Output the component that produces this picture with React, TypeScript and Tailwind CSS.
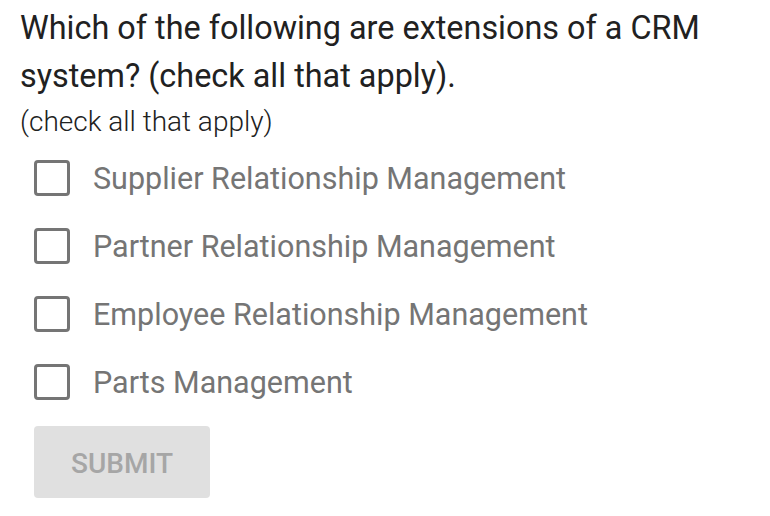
import { useState } from "react";

const options = [
  "Supplier Relationship Management",
  "Partner Relationship Management",
  "Employee Relationship Management",
  "Parts Management",
];

export default function App() {
  const [checked, setChecked] = useState<boolean[]>(options.map(() => false));

  const toggle = (i: number) =>
    setChecked((prev) => prev.map((v, j) => (j === i ? !v : v)));

  return (
    <div className="min-h-screen bg-white px-5 pt-[4px] font-['Roboto',sans-serif]">
      <h1 className="text-[32.4px] leading-[48px] text-[#212121] font-normal">
        Which of the following are extensions of a CRM system? (check all that apply).
      </h1>
      <p className="text-[28px] leading-[44px] font-light text-[#212121]">(check all that apply)</p>

      <div className="flex flex-col">
        {options.map((label, i) => (
          <label
            key={label}
            className="flex h-[68px] cursor-pointer items-center gap-[23px] pl-[14px]"
            onClick={() => toggle(i)}
          >
            <span className="flex h-[36px] w-[36px] shrink-0 items-center justify-center rounded-[4px] border-[3px] border-[#757575]">
              {checked[i] && <span className="h-4 w-4 bg-[#757575]" />}
            </span>
            <span className="mt-[3px] text-[30.5px] leading-none text-[#757575]">{label}</span>
          </label>
        ))}
      </div>

      <button
        disabled
        className="mt-[10px] ml-[14px] flex h-[72px] w-[176px] items-center justify-center rounded-[4px] bg-[#e0e0e0] pt-[3px] text-[28px] font-medium text-[#a6a6a6]"
      >
        SUBMIT
      </button>
    </div>
  );
}
